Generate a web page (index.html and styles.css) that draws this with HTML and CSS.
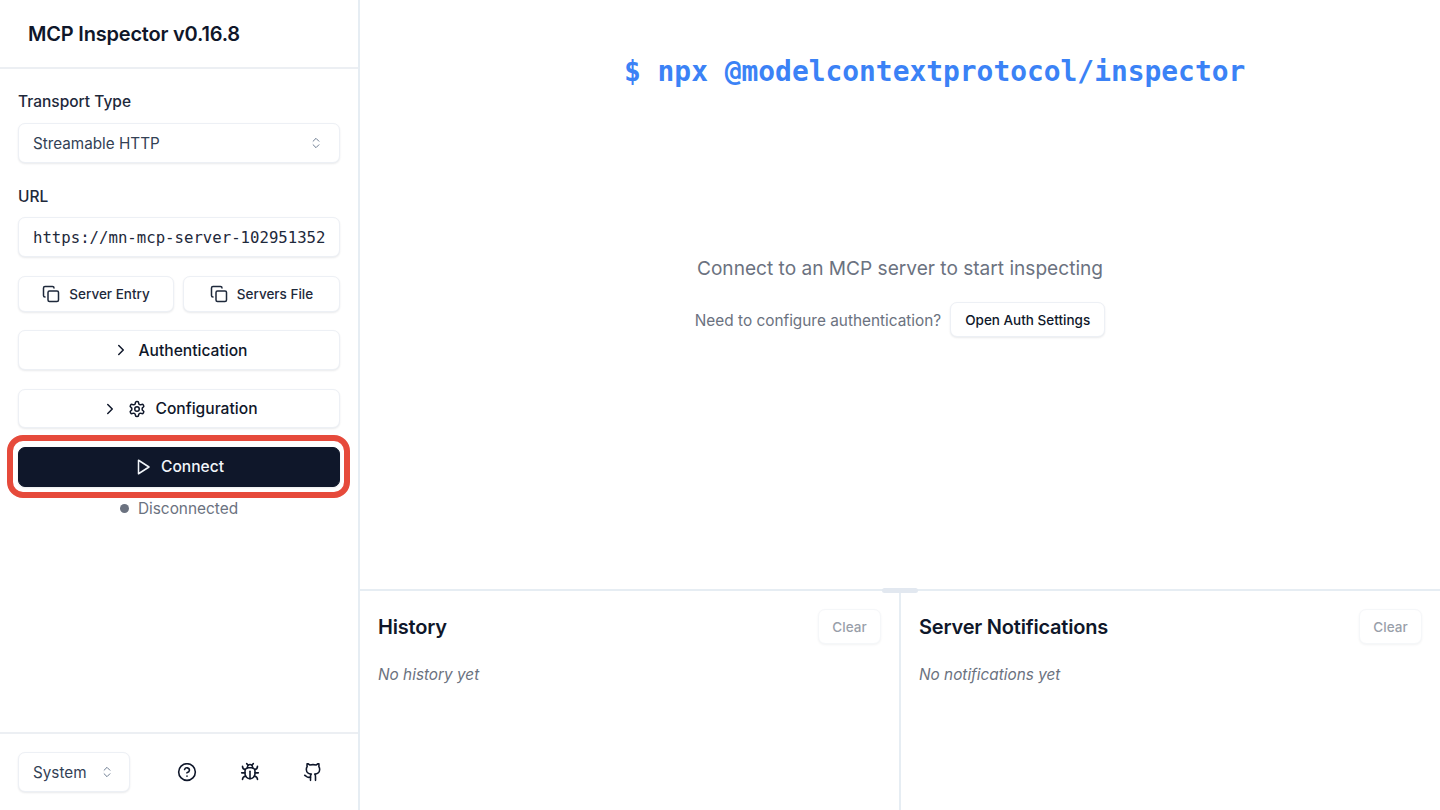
FILE: index.html
```html
<!DOCTYPE html>
<html lang="en">
<head>
<meta charset="utf-8">
<title>MCP Inspector</title>
<link rel="stylesheet" href="styles.css">
</head>
<body>
<div class="app">
  <aside class="sidebar">
    <header class="brand"><h1 class="brand-title">MCP Inspector v0.16.8</h1></header>
    <div class="form">
      <label class="label">Transport Type</label>
      <div class="field field-select">
        <span>Streamable HTTP</span>
        <svg class="icon-chev" viewBox="0 0 24 24"><path d="m7 15 5 5 5-5"/><path d="m7 9 5-5 5 5"/></svg>
      </div>
      <label class="label label-url">URL</label>
      <div class="field field-url"><span class="url-text">https://mn-mcp-server-102951352</span></div>
      <div class="copy-row">
        <button class="btn btn-copy">
          <svg class="icon" viewBox="0 0 24 24"><rect x="8" y="8" width="14" height="14" rx="2"/><path d="M4 16c-1.1 0-2-.9-2-2V4c0-1.1.9-2 2-2h10c1.100 0 2 .9 2 2"/></svg>
          <span>Server Entry</span>
        </button>
        <button class="btn btn-copy">
          <svg class="icon" viewBox="0 0 24 24"><rect x="8" y="8" width="14" height="14" rx="2"/><path d="M4 16c-1.1 0-2-.9-2-2V4c0-1.1.9-2 2-2h10c1.100 0 2 .9 2 2"/></svg>
          <span>Servers File</span>
        </button>
      </div>
      <button class="btn btn-wide btn-auth">
        <svg class="icon" viewBox="0 0 24 24"><path d="m9 18 6-6-6-6"/></svg>
        <span>Authentication</span>
      </button>
      <button class="btn btn-wide btn-config">
        <svg class="icon" viewBox="0 0 24 24"><path d="m9 18 6-6-6-6"/></svg>
        <svg class="icon" viewBox="0 0 24 24"><path d="M12.220 2h-.44a2 2 0 0 0-2 2v.18a2 2 0 0 1-1 1.730l-.43.25a2 2 0 0 1-2 0l-.15-.08a2 2 0 0 0-2.730.73l-.22.38a2 2 0 0 0 .73 2.730l.15.1a2 2 0 0 1 1 1.720v.51a2 2 0 0 1-1 1.740l-.15.09a2 2 0 0 0-.73 2.730l.22.38a2 2 0 0 0 2.730.73l.15-.08a2 2 0 0 1 2 0l.43.25a2 2 0 0 1 1 1.730V20a2 2 0 0 0 2 2h.44a2 2 0 0 0 2-2v-.18a2 2 0 0 1 1-1.730l.43-.25a2 2 0 0 1 2 0l.15.08a2 2 0 0 0 2.730-.73l.22-.39a2 2 0 0 0-.73-2.730l-.15-.08a2 2 0 0 1-1-1.740v-.5a2 2 0 0 1 1-1.740l.15-.09a2 2 0 0 0 .73-2.730l-.22-.38a2 2 0 0 0-2.730-.73l-.15.08a2 2 0 0 1-2 0l-.43-.25a2 2 0 0 1-1-1.730V4a2 2 0 0 0-2-2z"/><circle cx="12" cy="12" r="3"/></svg>
        <span>Configuration</span>
      </button>
      <div class="connect-wrap">
        <button class="btn btn-connect">
          <svg class="icon" viewBox="0 0 24 24"><polygon points="6 3 20 12 6 21 6 3"/></svg>
          <span>Connect</span>
        </button>
        <div class="highlight"></div>
      </div>
      <div class="status"><span class="dot"></span><span>Disconnected</span></div>
    </div>
    <footer class="side-foot">
      <div class="field field-theme">
        <span>System</span>
        <svg class="icon-chev" viewBox="0 0 24 24"><path d="m7 15 5 5 5-5"/><path d="m7 9 5-5 5 5"/></svg>
      </div>
      <div class="foot-icons">
        <button class="icon-btn"><svg class="icon-lg" viewBox="0 0 24 24"><circle cx="12" cy="12" r="10"/><path d="M9.090 9a3 3 0 0 1 5.830 1c0 2-3 3-3 3"/><path d="M12 17h.01"/></svg></button>
        <button class="icon-btn"><svg class="icon-lg" viewBox="0 0 24 24"><path d="m8 2 1.880 1.880"/><path d="M14.120 3.880 16 2"/><path d="M9 7.130v-1a3.003 3.003 0 1 1 6 0v1"/><path d="M12 20c-3.300 0-6-2.700-6-6v-3a4 4 0 0 1 4-4h4a4 4 0 0 1 4 4v3c0 3.300-2.700 6-6 6"/><path d="M12 20v-9"/><path d="M6.530 9C4.600 8.800 3 7.100 3 5"/><path d="M6 13H2"/><path d="M3 21c0-2.100 1.700-3.900 3.800-4"/><path d="M20.970 5c0 2.100-1.600 3.800-3.500 4"/><path d="M22 13h-4"/><path d="M17.200 17c2.100.1 3.800 1.900 3.800 4"/></svg></button>
        <button class="icon-btn"><svg class="icon-lg" viewBox="0 0 24 24"><path d="M15 22v-4a4.800 4.800 0 0 0-1-3.500c3 0 6-2 6-5.500.08-1.250-.27-2.480-1-3.500.28-1.150.28-2.350 0-3.500 0 0-1 0-3 1.500-2.640-.5-5.360-.5-8 0C6 2 5 2 5 2c-.3 1.150-.3 2.350 0 3.500A5.403 5.403 0 0 0 4 9c0 3.500 3 5.500 6 5.500-.39.49-.68 1.050-.85 1.650-.17.6-.22 1.230-.15 1.850v4"/><path d="M9 18c-4.510 2-5-2-7-2"/></svg></button>
      </div>
    </footer>
  </aside>
  <main class="main">
    <section class="stage">
      <div class="command">$ npx @modelcontextprotocol/inspector</div>
      <div class="prompt">
        <p class="prompt-title">Connect to an MCP server to start inspecting</p>
        <div class="prompt-row">
          <span class="prompt-text">Need to configure authentication?</span>
          <button class="btn btn-open">Open Auth Settings</button>
        </div>
      </div>
    </section>
    <section class="bottom">
      <div class="handle"></div>
      <div class="panel panel-left">
        <div class="panel-head"><h2 class="panel-title">History</h2><button class="btn btn-clear">Clear</button></div>
        <p class="panel-empty">No history yet</p>
      </div>
      <div class="panel">
        <div class="panel-head"><h2 class="panel-title">Server Notifications</h2><button class="btn btn-clear">Clear</button></div>
        <p class="panel-empty">No notifications yet</p>
      </div>
    </section>
  </main>
</div>
</body>
</html>
```
FILE: styles.css
```css
* { box-sizing: border-box; }
html, body { margin: 0; padding: 0; height: 100%; }
body { font-family: Inter, "Liberation Sans", sans-serif; color: #0f172a; background: #fff; overflow: hidden; }
svg { fill: none; stroke: currentColor; stroke-width: 2; stroke-linecap: round; stroke-linejoin: round; flex: none; }
button { font-family: inherit; margin: 0; padding: 0; cursor: pointer; }
h1, h2, p { margin: 0; }

.app { display: flex; width: 1440px; height: 810px; }
.sidebar { width: 360px; height: 810px; display: flex; flex-direction: column; border-right: 2px solid #e6edf3; }
.brand { height: 69px; padding: 0 28px; display: flex; align-items: center; border-bottom: 2px solid #eceff3; }
.brand-title { font-size: 20px; font-weight: 600; letter-spacing: -0.2px; line-height: 1; color: #0f172a; }
.form { flex: 1; padding: 21px 18px 0; }
.label { display: block; height: 24px; line-height: 24px; font-size: 15.5px; font-weight: 500; color: #1e293b; }
.field { display: flex; align-items: center; justify-content: space-between; height: 40px; border: 1px solid #edf0f5; border-radius: 7px; background: #fff; box-shadow: 0 1px 2px rgba(15, 23, 42, 0.09); font-size: 15.25px; color: #334155; }
.field-select { margin-top: 9px; padding: 0 16px 0 14px; }
.label-url { margin-top: 22px; }
.field-url { margin-top: 8px; padding: 0 14px; overflow: hidden; }
.url-text { font-family: "DejaVu Sans Mono", monospace; font-size: 15.68px; white-space: nowrap; color: #1e293b; }
.icon-chev { width: 14px; height: 14px; color: #64748b; stroke-width: 1.6; }
.icon { width: 18px; height: 18px; }
.btn { display: flex; align-items: center; justify-content: center; background: #fff; border: 1px solid #edf0f5; border-radius: 7px; box-shadow: 0 1px 2px rgba(15, 23, 42, 0.09); color: #0f172a; font-weight: 500; }
.copy-row { display: grid; grid-template-columns: 156fr 157fr; gap: 9px; margin-top: 19px; }
.btn-copy { height: 36px; gap: 9px; font-size: 13.5px; color: #1e293b; }
.btn-wide { width: 100%; font-size: 15.6px; }
.btn-auth { height: 40px; margin-top: 18px; gap: 9px; padding-left: 1px; }
.btn-config { height: 39px; margin-top: 19px; gap: 9px; padding-left: 1px; }
.connect-wrap { position: relative; margin-top: 18.5px; }
.btn-connect { width: 100%; height: 40.5px; gap: 9px; background: #0f172a; border-color: #0f172a; color: #f1f5f9; font-size: 15.6px; }
.highlight { position: absolute; left: -11px; right: -10px; top: -11.5px; bottom: -11px; border: 6px solid #e64a3b; border-radius: 16px; pointer-events: none; }
.status { display: flex; align-items: center; justify-content: center; gap: 9px; height: 24px; margin-top: 9px; font-size: 15.4px; color: #6b7280; }
.dot { width: 9px; height: 9px; border-radius: 50%; background: #6b7280; }
.side-foot { height: 78px; padding: 0 25px 0 18px; border-top: 2px solid #eceff3; display: flex; align-items: center; justify-content: space-between; }
.field-theme { width: 112px; padding: 0 15px 0 14px; }
.foot-icons { display: flex; gap: 23px; }
.icon-btn { width: 40px; height: 40px; display: flex; align-items: center; justify-content: center; background: transparent; border: 0; color: #0f172a; }
.icon-lg { width: 20px; height: 20px; stroke-width: 1.9; }

.main { flex: 1; display: flex; flex-direction: column; min-width: 0; }
.stage { position: relative; flex: 1; display: flex; flex-direction: column; align-items: center; }
.command { position: absolute; left: 264px; top: 53px; font-family: "DejaVu Sans Mono", monospace; font-weight: 700; font-size: 27.9px; line-height: 38px; color: #3b82f6; white-space: nowrap; }
.prompt { margin-top: 254px; display: flex; flex-direction: column; align-items: center; }
.prompt-title { font-size: 19.1px; line-height: 28px; color: #6b7280; }
.prompt-row { display: flex; align-items: center; gap: 9px; margin-top: 20px; font-size: 15.37px; color: #6b7280; }
.prompt-text { padding-top: 1px; }
.btn-open { width: 155px; height: 35px; font-size: 13.5px; color: #0f172a; }

.bottom { position: relative; height: 221px; display: flex; border-top: 2px solid #e6edf3; }
.handle { position: absolute; left: 522px; top: -3px; width: 36px; height: 5px; border-radius: 3px; background: #e2e8f0; }
.panel { flex: 1; padding: 18px 18px 0; min-width: 0; }
.panel-left { flex: 0 0 541px; border-right: 2px solid #e6edf3; }
.panel-head { display: flex; align-items: center; justify-content: space-between; height: 35px; }
.panel-title { font-size: 20px; font-weight: 600; letter-spacing: -0.2px; color: #0f172a; }
.btn-clear { width: 63px; height: 35px; font-size: 13.5px; opacity: 0.5; color: #334155; }
.panel-empty { margin-top: 19px; font-size: 15.35px; line-height: 24px; font-style: italic; color: #6b7280; }
```
